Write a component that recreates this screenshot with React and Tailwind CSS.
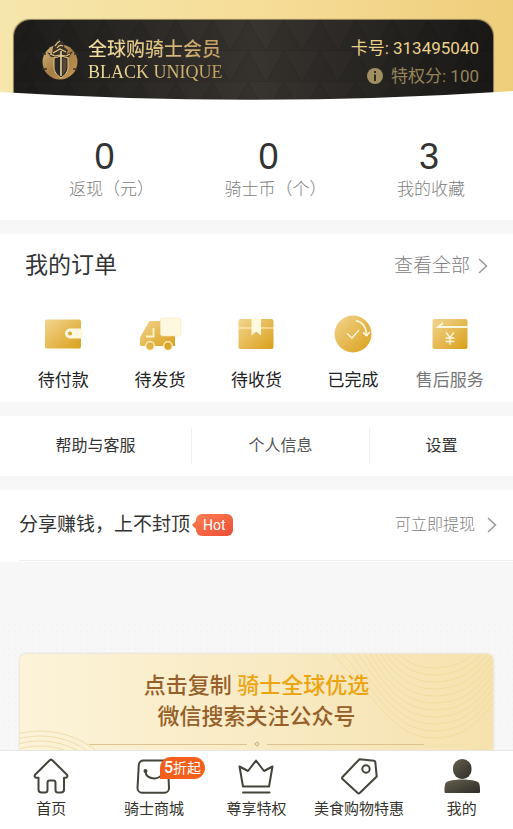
// Tela "Minha conta" do clube de membros: cartão, pedidos, atalhos e barra de navegação inferior.
import React from 'react';

// Contadores exibidos logo abaixo do cartão
const STATS = [
  { value: '0', label: '返现（元）', hasUnit: true },
  { value: '0', label: '骑士币（个）', hasUnit: true },
  { value: '3', label: '我的收藏', hasUnit: false }
];

// Gradiente dourado compartilhado pelos ícones de pedido
const GoldGradient = ({ id }) => (
  <defs>
    <linearGradient id={id} x1="0" y1="0" x2="1" y2="1">
      <stop offset="0" stopColor="#f3d590" />
      <stop offset="1" stopColor="#d9a01a" />
    </linearGradient>
  </defs>
);

// Carteira: aguardando pagamento
const WalletIcon = () => (
  <svg viewBox="0 0 44 40" className="h-10 w-11" aria-hidden="true">
    <GoldGradient id="gold-wallet" />
    <rect x="4" y="5.500" width="36" height="29" rx="2" fill="url(#gold-wallet)" />
    <path d="M29 14.500h11.500a1 1 0 0 1 1 1v8a1 1 0 0 1-1 1H29a5 5 0 0 1 0-10z" fill="#fff8e1" />
    <circle cx="29" cy="19.500" r="2" fill="#dba732" />
  </svg>
);

// Caminhão: aguardando envio
const TruckIcon = () => (
  <svg viewBox="0 0 44 40" className="h-10 w-11" aria-hidden="true">
    <GoldGradient id="gold-truck" />
    <path
      d="M12.500 7H37v25H3.500A1.500 1.500 0 0 1 2 30.500V25c0-1.500.5-2.500 1.300-3.800L10.500 8.500C11 7.500 11.500 7 12.500 7z"
      fill="url(#gold-truck)"
    />
    <path d="M15.500 14v8.500H8" fill="none" stroke="#fff3d0" strokeWidth="1.800" />
    <rect x="22.500" y="4" width="20.500" height="18" rx="2" fill="#fff8e1" stroke="#f6e6bd" strokeWidth="0.600" />
    <circle cx="12" cy="32" r="4.300" fill="#e2b349" stroke="#fff3d0" strokeWidth="1.300" />
    <circle cx="30" cy="32" r="4.300" fill="#dca52b" stroke="#fff3d0" strokeWidth="1.300" />
  </svg>
);

// Caixa: aguardando recebimento
const BoxIcon = () => (
  <svg viewBox="0 0 44 40" className="h-10 w-11" aria-hidden="true">
    <GoldGradient id="gold-box" />
    <rect x="4.500" y="5" width="35" height="30" rx="2" fill="url(#gold-box)" />
    <path d="M4.500 14h35" stroke="#fff3d0" strokeWidth="1.200" />
    <path d="M17.500 4.500h9.500v17l-4.800-4-4.700 4z" fill="#fff8e1" />
  </svg>
);

// Círculo com check: concluído
const DoneIcon = () => (
  <svg viewBox="0 0 44 40" className="h-10 w-11" aria-hidden="true">
    <GoldGradient id="gold-done" />
    <circle cx="22" cy="20" r="18.500" fill="url(#gold-done)" />
    <path d="M16 19.500l5 4.500 7-8" fill="none" stroke="#fff8e1" strokeWidth="1.300" />
    <path d="M25 6.500c6 1.500 10 6 10.500 13" fill="none" stroke="#fff8e1" strokeWidth="1.800" />
    <path d="M32 18.500l3.700 3 3-3.500" fill="none" stroke="#fff8e1" strokeWidth="1.800" />
  </svg>
);

// Cartão com seta e iene: pós-venda
const RefundIcon = () => (
  <svg viewBox="0 0 44 40" className="h-10 w-11" aria-hidden="true">
    <GoldGradient id="gold-refund" />
    <rect x="4.500" y="5" width="35" height="30" rx="2" fill="url(#gold-refund)" />
    <path d="M39.500 13H10l5-4" fill="none" stroke="#fff8e1" strokeWidth="1.800" />
    <path d="M18 18.500l4 5 4-5M22 23.500v7M17.500 24h9M17.500 27.500h9" fill="none" stroke="#fff8e1" strokeWidth="1.400" />
  </svg>
);

const ORDERS = [
  { label: '待付款', icon: WalletIcon, tone: 'text-[#222]' },
  { label: '待发货', icon: TruckIcon, tone: 'text-[#222]' },
  { label: '待收货', icon: BoxIcon, tone: 'text-[#222]' },
  { label: '已完成', icon: DoneIcon, tone: 'text-[#222]' },
  { label: '售后服务', icon: RefundIcon, tone: 'text-[#777]' }
];

// Props comuns dos ícones de contorno da barra inferior
const LINE = {
  fill: 'none',
  stroke: '#45443a',
  strokeWidth: 2,
  strokeLinejoin: 'round',
  strokeLinecap: 'round'
};

const HomeIcon = () => (
  <svg viewBox="0 0 40 40" className="size-10" aria-hidden="true">
    <path
      {...LINE}
      d="M18.700 3.200a2 2 0 0 1 2.600 0L35.700 17.500c1.200 1.200.8 3.300-1 3.300H33V32.500a3 3 0 0 1-3 3h-3a2.500 2.500 0 0 1-2.500-2.500V25.500a2 2 0 0 0-2-2h-4a2 2 0 0 0-2 2v7.500A2.500 2.500 0 0 1 14 35.500h-3.500a3 3 0 0 1-3-3V20.800H5.300c-1.800 0-2.200-2.100-1-3.300z"
    />
  </svg>
);

const MallIcon = () => (
  <svg viewBox="0 0 40 40" className="size-10" aria-hidden="true">
    <path {...LINE} d="M9.500 3.500h20a4.500 4.500 0 0 1 4.500 4.200l1 23.500a4.500 4.500 0 0 1-4.500 4.500H8a4.500 4.500 0 0 1-4.500-4.500l1.300-23.500A4.500 4.500 0 0 1 9.500 3.500z" />
    <path {...LINE} d="M11.500 15c1 7 12 9 17 2" />
    <circle cx="11.500" cy="14" r="2" fill="#45443a" />
  </svg>
);

const CrownIcon = () => (
  <svg viewBox="0 0 40 40" className="size-10" aria-hidden="true">
    <path {...LINE} d="M3.500 9.500l8.500 4.500L20 3.500l8 10.500 8.500-4.500-3.500 20H7z" />
    <path {...LINE} d="M7 35.500h26.500" />
  </svg>
);

const TagIcon = () => (
  <svg viewBox="0 0 40 40" className="size-10" aria-hidden="true">
    <path {...LINE} d="M20.500 2.200l14.500 1.500a1.500 1.500 0 0 1 1.300 1.300l1.400 14.500-17 16.500a1.500 1.500 0 0 1-2 0L3.500 22a1.500 1.500 0 0 1 0-2z" />
    <circle {...LINE} cx="27" cy="12" r="3.700" />
  </svg>
);

const UserIcon = () => (
  <svg viewBox="0 0 40 40" className="size-10" aria-hidden="true">
    <defs>
      <linearGradient id="user-fill" x1="0" y1="0" x2="1" y2="1">
        <stop offset="0" stopColor="#66624f" />
        <stop offset="1" stopColor="#2c2b27" />
      </linearGradient>
    </defs>
    <rect x="11" y="2" width="18.500" height="20" rx="9" fill="url(#user-fill)" />
    <path d="M2.500 34.500c0-7.500.5-9.500 4.500-10.500 8-2 18.500-2 26.500 0 4 1 4.500 3 4.500 10.500 0 1-.5 1.500-1.500 1.500H4c-1 0-1.500-.5-1.500-1.500z" fill="url(#user-fill)" />
  </svg>
);

const TABS = [
  { label: '首页', icon: HomeIcon },
  { label: '骑士商城', icon: MallIcon, discount: '5' },
  { label: '尊享特权', icon: CrownIcon },
  { label: '美食购物特惠', icon: TagIcon },
  { label: '我的', icon: UserIcon }
];

const Chevron = () => (
  <svg viewBox="0 0 10 16" className="h-4 w-2.5" fill="none" stroke="#999" strokeWidth="1.500" aria-hidden="true">
    <path d="M1 1l7.500 7L1 15" />
  </svg>
);

// Brasão do cavaleiro: moeda dourada, elmo com pluma, escudo e espada
const KnightLogo = () => (
  <svg viewBox="0 0 36 44" className="h-11 w-9" aria-hidden="true">
    <defs>
      <linearGradient id="crest" x1="0" y1="0" x2="1" y2="1">
        <stop offset="0" stopColor="#d9bb7c" />
        <stop offset="0.500" stopColor="#a57d45" />
        <stop offset="1" stopColor="#c79c58" />
      </linearGradient>
    </defs>
    {/* Moeda com os entalhes laterais */}
    <circle cx="18" cy="25" r="17.500" fill="url(#crest)" />
    <path d="M0 17h4M0 32h5M32 17h4M31 32h5" stroke="#3a3128" strokeWidth="1.500" />
    {/* Elmo inclinado com pluma */}
    <path d="M10 17c1-3 0-6 2-9 1-3 3-4 5-7l2 3c3 0 4 3 3 6l4 3-2 5-7 2z" fill="#3a3128" />
    <path d="M13 9c2-3 3-4 5-5M15 11c2-3 4-3 6-2M11 16l7-4 6 3" stroke="#e4c887" strokeWidth="1.300" fill="none" />
    <path d="M5 15l7 3 6-2 7 1 6-3-4 6H9z" fill="#3a3128" />
    <path d="M8 17l5 2 5-1 6 1 4-2" stroke="#e4c887" strokeWidth="1.200" fill="none" />
    {/* Escudo dividido pela espada */}
    <path d="M12 21l7-2 7 2v9c0 5-3 8-7 11-4-3-7-6-7-11z" fill="#2b2825" stroke="#e4c887" strokeWidth="1" />
    <path d="M20.500 21l4 1v8c0 3-2 6-4 8z" fill="#57493a" />
    <path d="M19 14v25" stroke="#f3dfa9" strokeWidth="1.500" />
  </svg>
);

// Cabeçalho dourado com o cartão preto e a curva branca inferior
const MemberCard = () => (
  <header className="relative h-[100px] overflow-hidden bg-linear-to-r from-[#f5e6ab] via-[#f6dd98] to-[#efce7b] pt-5 pr-5 pl-3.5">
    <div className="relative flex h-full items-start justify-between overflow-hidden rounded-t-2xl bg-linear-to-r from-[#1d1c1a] via-[#383430] to-[#191816] pr-3.5 pl-7 shadow-[0_0_1px_1px_#8a7c50]">
      {/* Textura de triângulos do cartão */}
      <svg className="absolute inset-0 size-full" aria-hidden="true">
        <defs>
          <pattern id="triangles" width="36" height="31" patternUnits="userSpaceOnUse">
            <path d="M0 31L18 0l18 31z" fill="#000" fillOpacity="0.060" />
            <path d="M0 31h36M0 31L18 0l18 31" stroke="#000" strokeOpacity="0.110" fill="none" />
          </pattern>
        </defs>
        <rect width="100%" height="100%" fill="url(#triangles)" />
      </svg>
      <div className="relative flex items-center gap-2.5 pt-4">
        <KnightLogo />
        <div className="bg-linear-to-r from-[#f7e3a4] to-[#c39d5f] bg-clip-text pt-0.5 text-transparent">
          <h1 className="text-[19px] leading-6 font-medium">全球购骑士会员</h1>
          <p className="font-['Liberation_Serif',serif] text-lg leading-5">BLACK UNIQUE</p>
        </div>
      </div>
      <div className="relative pt-4 text-right text-[17px] leading-6">
        <p className="text-[#ecd28c]">卡号: 313495040</p>
        <p className="flex items-center justify-end gap-2 pt-1 text-[#95845a]">
          <svg viewBox="0 0 16 16" className="size-4" aria-hidden="true">
            <circle cx="8" cy="8" r="8" fill="#a08f60" />
            <path d="M8 3v2M8 6.500V13" stroke="#24211d" strokeWidth="1.800" />
          </svg>
          特权分: 100
        </p>
      </div>
    </div>
    <svg viewBox="0 0 100 10" preserveAspectRatio="none" className="absolute inset-x-0 bottom-0 h-2.5 w-full" aria-hidden="true">
      <path d="M0 2Q50 18 100 1V10H0z" fill="#fff" />
    </svg>
  </header>
);

const Stats = () => (
  <section className="flex justify-between bg-white pt-[37px] pr-12 pb-[19px] pl-[69px]">
    {STATS.map((item) => (
      <div key={item.label} className="text-center">
        {/* O parêntese final ocupa meia largura vazia, por isso o recuo no número */}
        <p className={`font-['Liberation_Sans',sans-serif] text-4xl leading-10 text-[#333] ${item.hasUnit ? 'pr-3.5' : 'pr-1'}`}>
          {item.value}
        </p>
        <p className="text-[17px] leading-6 font-light text-[#808080]">{item.label}</p>
      </div>
    ))}
  </section>
);

const Orders = () => (
  <section className="bg-white px-[15px] pt-4 pb-2.5">
    <div className="flex items-center justify-between pr-2.5 pl-2.5">
      <h2 className="text-[23px] leading-8 text-[#333]">我的订单</h2>
      <a href="#orders" className="flex items-center gap-2 text-[19px] leading-8 font-light text-[#808080]">
        查看全部
        <Chevron />
      </a>
    </div>
    <div className="grid grid-cols-5 pt-8">
      {ORDERS.map(({ label, icon: Icon, tone }) => (
        <button key={label} type="button" className="flex flex-col items-center gap-3.5">
          <Icon />
          <span className={`text-[17px] leading-6 whitespace-nowrap ${tone}`}>{label}</span>
        </button>
      ))}
    </div>
  </section>
);

// Atalhos separados por linhas verticais
const Shortcuts = () => (
  <section className="grid grid-cols-[192fr_178fr_143fr] divide-x divide-[#eee] bg-white py-3 text-base text-[#333]">
    <button type="button" className="h-9">帮助与客服</button>
    <button type="button" className="h-9 text-[#555]">个人信息</button>
    <button type="button" className="h-9">设置</button>
  </section>
);

const ShareRow = () => (
  <section className="bg-white pb-px pl-[19px]">
    <a href="#share" className="flex h-[71px] items-center justify-between border-b border-[#eee] pr-4">
      <span className="flex items-center text-[19px] leading-8 text-[#333]">
        分享赚钱，上不封顶
        <span className="ml-0.5 h-0 w-0 border-y-4 border-r-4 border-y-transparent border-r-[#f8693f]" />
        <span className="rounded-md bg-linear-to-br from-[#ff7d50] to-[#ea4c36] px-1.5 text-sm leading-[22px] text-white">
          <span className="px-px">Hot</span>
        </span>
      </span>
      <span className="flex items-center gap-3 text-base font-light text-[#808080]">
        可立即提现
        <Chevron />
      </span>
    </a>
  </section>
);

const Banner = () => (
  <section className="mt-[60px] bg-[radial-gradient(#f4f4f4_1px,transparent_1px)] bg-size-[6px_6px] px-5 pt-8">
    <button
      type="button"
      className="relative flex h-24 w-full flex-col items-center overflow-hidden rounded-t-md bg-linear-to-r from-[#fcf3d9] to-[#f5e2ae] pt-4 text-[22px] leading-[31px] font-medium text-[#95602a] shadow-[0_0_3px_#d8cdb0]"
    >
      {/* Ondas decorativas nos cantos */}
      <svg viewBox="0 0 160 90" className="absolute top-0 right-0 h-[90px] w-40" fill="none" stroke="#eed592" strokeOpacity="0.600" aria-hidden="true">
        {[0, 7, 14, 21, 28, 35, 42, 49, 56, 63, 70].map((step) => (
          <path key={step} d={`M${step / 2} ${-step}C40 ${40 - step} 60 ${84 - step} 100 ${84 - step}S150 ${60 - step} 175 ${30 - step}`} />
        ))}
      </svg>
      <svg viewBox="0 0 90 20" className="absolute bottom-0 left-0 h-5 w-[90px]" fill="none" stroke="#f0dcab" aria-hidden="true">
        {[90, 85, 80, 75].map((radius) => (
          <circle key={radius} cx="20" cy="91" r={radius} />
        ))}
      </svg>
      <span className="relative">
        点击复制 <span className="text-[#eca413]">骑士全球优选</span>
      </span>
      <span className="relative">微信搜索关注公众号</span>
      <span className="relative flex w-full items-center gap-2 px-[69px] pt-2.5">
        <span className="h-px flex-1 bg-[#dcc490]" />
        <span className="size-1 rotate-45 border border-[#cdb27c]" />
        <span className="h-px flex-1 bg-[#dcc490]" />
      </span>
    </button>
  </section>
);

const TabBar = () => (
  <nav className="relative grid grid-cols-5 border-t border-[#e6e6e6] bg-white pt-1.5 pb-2">
    {TABS.map(({ label, icon: Icon, discount }) => (
      <button key={label} type="button" className="relative flex flex-col items-center text-[15px] leading-6 whitespace-nowrap text-[#33322c]">
        <Icon />
        {label}
        {discount && (
          <span className="absolute top-0 left-1/2 ml-1.5 rounded-full rounded-bl-none bg-[#f4601c] px-1 text-sm leading-[22px] text-white">
            <span className="text-base leading-[22px] font-medium">{discount}</span>折起
          </span>
        )}
      </button>
    ))}
  </nav>
);

export default function App() {
  return (
    <div className="flex h-screen flex-col bg-[#f7f7f7] font-[Roboto,'Noto_Sans_CJK_SC',sans-serif]">
      <main className="min-h-0 flex-1 overflow-y-auto [scrollbar-width:none]">
        <MemberCard />
        <div className="flex flex-col gap-3.5">
          <Stats />
          <Orders />
          <Shortcuts />
          <ShareRow />
        </div>
        <Banner />
      </main>
      <TabBar />
    </div>
  );
}
